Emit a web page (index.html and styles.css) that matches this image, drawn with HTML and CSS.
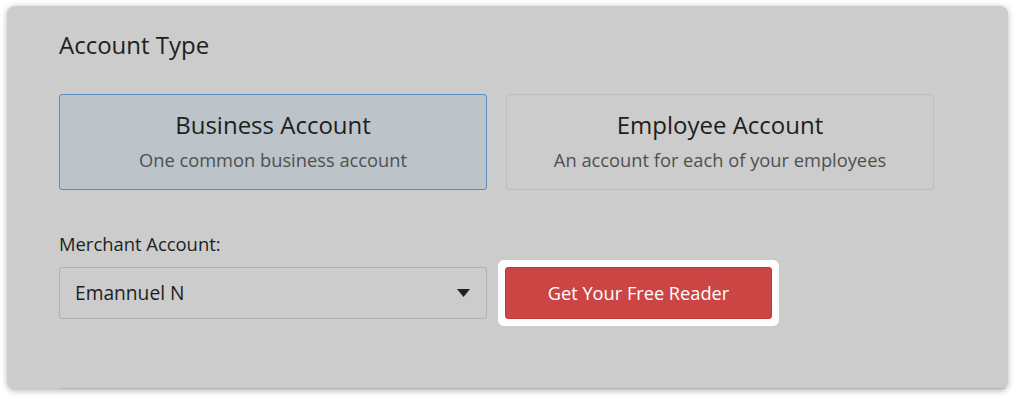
FILE: index.html
```html
<!DOCTYPE html>
<html lang="en">
<head>
<meta charset="utf-8">
<title>Account Type</title>
<link rel="stylesheet" href="styles.css">
</head>
<body>
<main class="panel">
  <h2 class="section-title">Account Type</h2>
  <div class="account-types">
    <button class="type-card is-selected" type="button">
      <span class="type-title">Business Account</span>
      <span class="type-desc">One common business account</span>
    </button>
    <button class="type-card" type="button">
      <span class="type-title">Employee Account</span>
      <span class="type-desc">An account for each of your employees</span>
    </button>
  </div>
  <label class="field-label">Merchant Account:</label>
  <div class="merchant-row">
    <div class="select">
      <span class="select-value">Emannuel N</span>
      <svg class="select-caret" width="13" height="8" viewBox="0 0 13 8" aria-hidden="true"><path d="M0 0H13L6.5 8Z" fill="#222"/></svg>
    </div>
    <div class="highlight">
      <button class="btn-primary" type="button">Get Your Free Reader</button>
    </div>
  </div>
  <div class="divider"></div>
</main>
</body>
</html>
```

FILE: styles.css
```css
* { box-sizing: border-box; }

html, body {
  margin: 0;
  background: #ffffff;
}

body {
  padding: 6px 8px 9px 7px;
  font-family: "Open Sans", "Liberation Sans", sans-serif;
  color: #222222;
}

.panel {
  width: 1001px;
  height: 384px;
  background: #cccccc;
  border-radius: 8px;
  box-shadow: 0 1px 6px rgba(0, 0, 0, 0.28);
  padding: 23px 0 0 52px;
  display: flex;
  flex-direction: column;
  overflow: hidden;
}

.section-title {
  margin: 0;
  font-size: 24px;
  line-height: 32px;
  font-weight: 400;
  color: #1e1e1e;
}

.account-types {
  margin-top: 33px;
  display: grid;
  grid-template-columns: 428px 428px;
  column-gap: 19px;
  width: 875px;
}

.type-card {
  height: 96px;
  padding: 15px 10px 17px;
  border: 1px solid #bdbdbd;
  border-radius: 3px;
  background: #cccccc;
  font-family: inherit;
  display: flex;
  flex-direction: column;
  align-items: center;
  gap: 6px;
  cursor: pointer;
}

.type-card.is-selected {
  background: #bcc3c9;
  border-color: #5a8fbd;
}

.type-title {
  font-size: 24px;
  line-height: 30px;
  color: #1e1e1e;
}

.type-desc {
  font-size: 18.3px;
  line-height: 27px;
  color: #505050;
}

.field-label {
  display: block;
  margin-top: 42px;
  font-size: 18.4px;
  line-height: 24px;
  color: #1e1e1e;
}

.merchant-row {
  margin-top: 4px;
  display: flex;
  align-items: center;
  gap: 11px;
}

.select {
  width: 428px;
  height: 52px;
  border: 1px solid #b2b2b2;
  border-radius: 3px;
  background: #cccccc;
  display: flex;
  align-items: center;
  justify-content: space-between;
  padding: 0 16px 0 15px;
}

.select-value {
  font-size: 19.2px;
  line-height: 24px;
  color: #1e1e1e;
}

.select-caret {
  display: block;
}

.highlight {
  background: #ffffff;
  border-radius: 6px;
  padding: 7px;
}

.btn-primary {
  display: block;
  width: 267px;
  height: 52px;
  border: 1px solid #bf3838;
  border-radius: 3px;
  background: #cc4545;
  color: #ffffff;
  font-family: inherit;
  font-size: 18.2px;
  line-height: 24px;
  cursor: pointer;
}

.divider {
  margin-top: auto;
  margin-bottom: 1px;
  height: 1px;
  background: #b8b8b8;
}
```
